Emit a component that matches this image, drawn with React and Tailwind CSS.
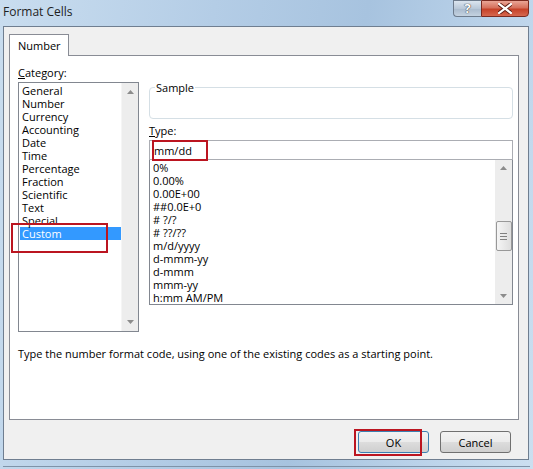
import React from 'react';

const categorias = [
  'General', 'Number', 'Currency', 'Accounting', 'Date', 'Time',
  'Percentage', 'Fraction', 'Scientific', 'Text', 'Special', 'Custom',
];

const formatos = [
  '0%', '0.00%', '0.00E+00', '##0.0E+0', '# ?/?', '# ??/??',
  'm/d/yyyy', 'd-mmm-yy', 'd-mmm', 'mmm-yy', 'h:mm AM/PM',
];

function ArrowUp() {
  return (
    <svg width="7" height="4" viewBox="0 0 7 4">
      <path d="M0 4 L3.5 0 L7 4 Z" fill="#8c8c8c" />
    </svg>
  );
}

function ArrowDown() {
  return (
    <svg width="7" height="4" viewBox="0 0 7 4">
      <path d="M0 0 L3.5 4 L7 0 Z" fill="#8c8c8c" />
    </svg>
  );
}

// marco rojo de anotación sobre la captura
function Marca({ className }) {
  return <div className={`absolute border-2 border-[#bb1520] pointer-events-none ${className}`} />;
}

export default function App() {
  return (
    <div className="relative w-[533px] h-[469px] overflow-hidden font-['Open_Sans','Noto_Sans',sans-serif] text-[11px] leading-[13px] text-black bg-[linear-gradient(100deg,#c9ddef_0%,#b4cde6_35%,#a7c3df_60%,#bed5eb_85%,#cbdff0_100%)]">
      {/* BARRA DE TITULO */}
      <div className="flex h-[26px] items-start justify-between">
        <div className="pl-[3px] pt-[5px] text-[12px] leading-[14px] text-[#1e1e1e]">Format Cells</div>
        <div className="flex mr-[4px]">
          <div className="w-[28px] h-[17px] flex items-center justify-center border border-r-0 border-[#6d7b8c] rounded-bl-[4px] bg-[linear-gradient(#dbe5ef,#b9c8d8_50%,#a9bacd_51%,#c4d2e0)] text-white font-bold text-[13px] [text-shadow:0_0_1px_#333,0_0_1px_#333]">?</div>
          <div className="w-[48px] h-[17px] flex items-center justify-center border border-[#7a2a20] rounded-br-[4px] bg-[linear-gradient(#eaa596,#d6705c_45%,#c64128_55%,#d6684f)]">
            <svg width="14" height="11" viewBox="0 0 14 11">
              <path d="M1 1 L13 10 M13 1 L1 10" stroke="#5a1a12" strokeWidth="4" strokeLinecap="square" />
              <path d="M1 1 L13 10 M13 1 L1 10" stroke="#ffffff" strokeWidth="2.2" strokeLinecap="square" />
            </svg>
          </div>
        </div>
      </div>

      {/* AREA CLIENTE */}
      <div className="ml-[3px] w-[526px] h-[434px] border border-[#6f7e90] bg-[#f0f0f0] pl-[5px] pt-[7px]">
        <div className="relative z-10 w-[60px] h-[22px] -mb-[1px] border border-b-0 border-[#898c95] bg-white pl-[8px] pt-[4px]">
          Number
        </div>

        <div className="w-[510px] h-[365px] border border-[#898c95] bg-white pl-[8px]">
          <div className="flex">
            {/* COLUMNA IZQUIERDA: CATEGORIA */}
            <div className="w-[121px]">
              <div className="mt-[10px] mb-[3px]"><span className="underline">C</span>ategory:</div>
              <div className="flex h-[250px] border border-[#828790]">
                <div className="flex-1 pl-[1px] pt-[1px]">
                  {categorias.map((c) => (
                    <div
                      key={c}
                      className={`h-[13px] pl-[2px] ${c === 'Custom' ? 'bg-[#3399ff] text-white' : ''}`}
                    >
                      {c}
                    </div>
                  ))}
                </div>
                <div className="w-[17px] flex flex-col items-center justify-between py-[7px] bg-[#ededed] border-l border-[#f5f5f5]">
                  <ArrowUp />
                  <ArrowDown />
                </div>
              </div>
            </div>

            {/* COLUMNA DERECHA: MUESTRA Y TIPO */}
            <div className="ml-[10px] w-[364px]">
              <fieldset className="mt-[25px] h-[38px] border border-[#d5dfe5] rounded-[4px] px-[5px]">
                <legend className="px-[1px] leading-[13px]">Sample</legend>
              </fieldset>
              <div className="mt-[5px] mb-[3px]"><span className="underline">T</span>ype:</div>
              <div className="h-[20px] border border-[#abadb3] pl-[4px] pt-[3px]">mm/dd</div>
              <div className="flex h-[145px] border border-t-0 border-[#828790]">
                <div className="flex-1 pl-[3px] pt-[1px] overflow-hidden">
                  {formatos.map((f) => (
                    <div key={f} className="h-[13px] whitespace-nowrap">{f}</div>
                  ))}
                </div>
                <div className="w-[17px] flex flex-col items-center py-[6px] bg-[#ededed]">
                  <ArrowUp />
                  <div className="mt-[51px] w-[16px] h-[30px] flex flex-col items-center justify-center gap-[2px] border border-[#989898] rounded-[2px] bg-[linear-gradient(90deg,#f5f5f5,#dedede)]">
                    <div className="w-[7px] h-[1px] bg-[#808080]" />
                    <div className="w-[7px] h-[1px] bg-[#808080]" />
                    <div className="w-[7px] h-[1px] bg-[#808080]" />
                  </div>
                  <div className="flex-1" />
                  <ArrowDown />
                </div>
              </div>
            </div>
          </div>

          <div className="mt-[15px] whitespace-nowrap">
            Type the number format code, using one of the existing codes as a starting point.
          </div>
        </div>

        {/* BOTONES */}
        <div className="flex justify-end gap-[11px] pr-[17px] mt-[11px]">
          <button className="w-[71px] h-[22px] border border-[#3c7fb1] rounded-[3px] bg-[linear-gradient(#f2f2f2,#ebebeb_50%,#dddddd_51%,#cfcfcf)] leading-[13px]">
            OK
          </button>
          <button className="w-[71px] h-[22px] border border-[#707070] rounded-[3px] bg-[linear-gradient(#f2f2f2,#ebebeb_50%,#dddddd_51%,#cfcfcf)] leading-[13px]">
            Cancel
          </button>
        </div>
      </div>

      <div className="mx-[3px] mt-[6px] h-[1px] bg-[#7f93a8]" />

      {/* ANOTACIONES ROJAS */}
      <Marca className="left-[11px] top-[223px] w-[97px] h-[30px]" />
      <Marca className="left-[152px] top-[140px] w-[56px] h-[21px]" />
      <Marca className="left-[354px] top-[429px] w-[68px] h-[27px]" />
    </div>
  );
}
